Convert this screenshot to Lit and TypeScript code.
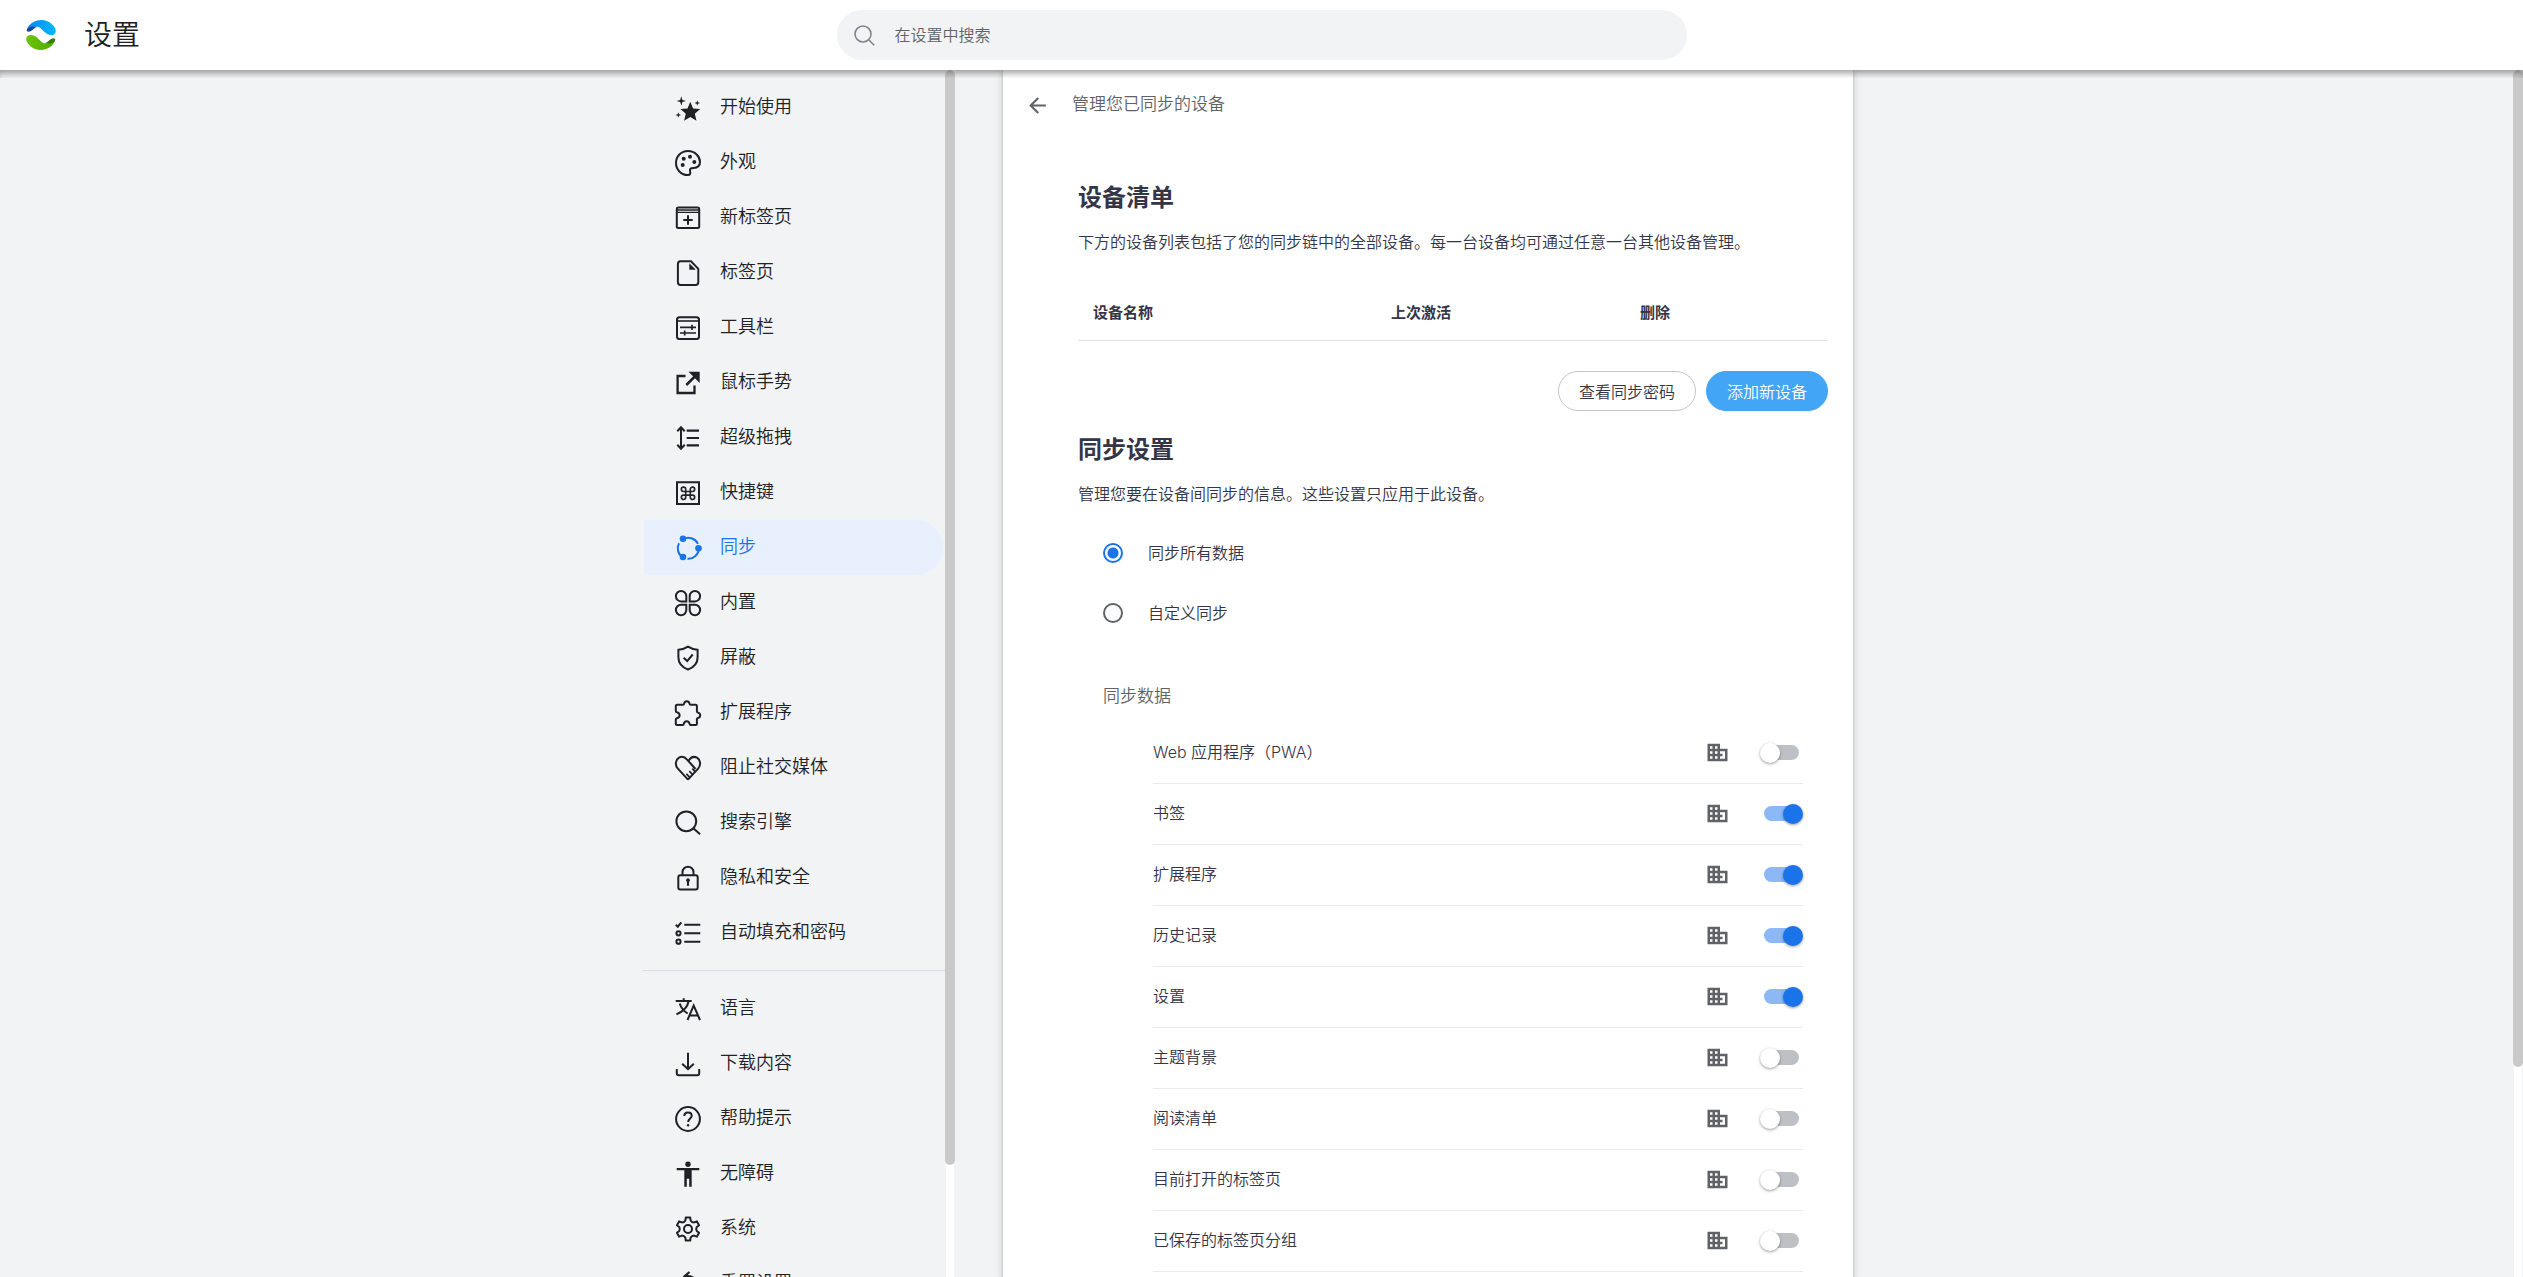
import { LitElement, html, css, svg, type SVGTemplateResult } from "lit";
import { customElement, property, state } from "lit/decorators.js";
import { classMap } from "lit/directives/class-map.js";

const cog = (() => {
  const pts: string[] = [];
  for (let i = 0; i < 6; i++) {
    const at = (deg: number, r: number) => {
      const a = ((deg + i * 60 - 90) * Math.PI) / 180;
      return `${(13 + r * Math.cos(a)).toFixed(2)} ${(12 + r * Math.sin(a)).toFixed(2)}`;
    };
    pts.push(`${i ? "L" : "M"}${at(-11, 11.7)} L${at(11, 11.7)} L${at(17, 9)} Q${at(30, 7.6)} ${at(43, 9)}`);
  }
  return pts.join(" ") + "Z";
})();

const icons: Record<string, SVGTemplateResult> = {
  star: svg`
    <path class="solid" d="M15.3 5.8l2.8 6.6 7.1.6-5.4 4.7 1.7 7.1-6.2-3.8-6.2 3.8 1.7-7.1-5.4-4.7 7.1-.6z"/>
    <path class="solid" d="M6.3.3l1.1 3.6L11 5 7.4 6.1 6.3 9.7 5.2 6.1 1.6 5l3.6-1.1zM22.3 4.2l.7 2.1 2.1.7-2.1.7-.7 2.1-.7-2.1-2.1-.7 2.1-.7zM3.3 16.2l.7 2.1 2.1.7-2.1.7-.7 2.1-.7-2.1L.5 19l2.1-.7z"/>`,
  palette: svg`
    <path d="M13 24C6 24 1 18.5 1 12S6 0 13 0s12 5.5 12 11c0 4-2.500 5.800-6.500 6-3 .1-4 1-3.400 3.300.5 2.200 0 3.700-2.100 3.700z"/>
    <g class="solid"><circle cx="8.700" cy="7.700" r="2"/><circle cx="15" cy="5.700" r="2"/><circle cx="19.300" cy="11" r="2"/><circle cx="7.700" cy="14" r="2"/></g>`,
  newtab: svg`<rect x="1.800" y="1.500" width="22.400" height="20.500" rx="1.500"/><path d="M2 6.300h22M2 4h22" stroke-width="1.300"/><path d="M13 9.300v9.400M8.300 14h9.400"/>`,
  page: svg`<path d="M5.500.300h10.500l7.300 7.500v13.500a2.700 2.700 0 0 1-2.700 2.700h-15a2.700 2.700 0 0 1-2.700-2.700V3a2.700 2.700 0 0 1 2.600-2.700z"/><path class="solid" d="M14.300 2.300v6.500h6.500z"/>`,
  toolbar: svg`<rect x="2" y="1.300" width="22" height="21.700" rx="2.500"/><path d="M2 5h22" stroke-width="1.600"/><path d="M5 11.300h16M17 8.700v5.200M5 17h16M9.700 14.400v5.200" stroke-width="1.700"/>`,
  open: svg`<path d="M10.500 5H2.600v17H19.500v-7.500" stroke-width="2.300"/><path d="M11.300 14l9-9" stroke-width="2.500"/><path class="solid" d="M13.500.700h11.200v11.200z"/>`,
  lines: svg`<path d="M6 1.500v21M2.300 5.300L6 1.300l3.700 4M2.300 18.700l3.700 4 3.700-4"/><path d="M11.700 4.700H24M11.700 12H24M11.700 19.300H24" stroke-width="2.200"/>`,
  command: svg`<path d="M2 1.300h22v21.700H2z" stroke-width="2"/><path d="M10.700 8.300v8a2.200 2.200 0 1 1-2.200-2.200h9a2.200 2.200 0 1 1-2.200 2.200v-8a2.200 2.200 0 1 1 2.200 2.200h-9a2.200 2.200 0 1 1 2.200-2.200z" stroke-width="1.600"/>`,
  sync: svg`<path d="M8 3.200A10.600 10.600 0 0 1 23 7.900M23.900 12.300A10.600 10.600 0 0 1 12.500 22.800M8 21.400A10.600 10.600 0 0 1 4 7.200" stroke-width="2"/><g class="solid"><circle cx="8" cy="2.800" r="3.300"/><circle cx="23.500" cy="12.300" r="3.300"/><circle cx="8" cy="21" r="3.300"/></g>`,
  clover: svg`<path d="M11.300 10.400H6.100a5.200 5.200 0 1 1 5.200-5.200zM14.700 10.400h5.200a5.200 5.200 0 1 0-5.200-5.200zM11.300 13.800H6.100a5.200 5.200 0 1 0 5.200 5.200zM14.700 13.800h5.200a5.200 5.200 0 1 1-5.200 5.200z"/>`,
  shield: svg`<path d="M13 .600c2.800 1.800 6 2.900 9.600 3.200v7.400c0 5.800-4 10.200-9.600 12.300C7.400 21.400 3.400 17 3.400 11.200V3.800C7 3.500 10.200 2.400 13 .600z"/><path d="M8.700 11.800l3.500 3.300 5.500-6.600"/>`,
  puzzle: svg`<path d="M2 3.800h6c.8 0 1-.500 1.100-1.200C9.400 1.200 10.300.300 11.800.300s2.400.900 2.700 2.300c.100.700.500 1.200 1.200 1.200h5c.800 0 1.200.400 1.200 1.200v5.300c0 .800.400 1.100 1.100 1.300 1.300.400 2.200 1.300 2.200 2.700s-.900 2.400-2.200 2.700c-.7.200-1.100.500-1.100 1.300v4.600c0 .700-.400 1.100-1.200 1.100h-5c-.8 0-1-.400-1.100-1.100-.300-1.700-1.200-2.700-2.900-2.700s-2.600 1-2.900 2.700c-.1.700-.400 1.100-1.100 1.100H2c-.8 0-1.200-.4-1.200-1.100v-4.400c0-.8.400-1.100 1.100-1.300 1.700-.400 2.700-1.400 2.700-3s-1-2.600-2.700-3c-.7-.200-1.100-.5-1.100-1.300V5c0-.8.400-1.200 1.200-1.200z"/>`,
  heart: svg`<path d="M13 23.600L2.700 12.400C-.300 9 .500 3.800 4 1.700c3-1.800 6-.600 8.300 2.100L20.500 13M13.500 4.800C15.800 1.200 19 0 22 1.700c3.500 2.100 4.200 7.200 1.300 10.600L13 23.600"/><path d="M17.300 12.600l2.600 2.900M14.300 15.100l3.200 3.400M11.400 17.800l3.400 3.500" stroke-width="1.700"/>`,
  search: svg`<circle cx="11.300" cy="10.300" r="9.900"/><path d="M18.300 17.200l6.800 6"/>`,
  lock: svg`<rect x="3.300" y="9.300" width="19.400" height="14.300" rx="2"/><path d="M7.500 9.300V6.200a5.500 5.500 0 0 1 11 0v3.100"/><path class="solid" d="M13 12.300a2 2 0 0 1 1 3.700v3.700h-2V16a2 2 0 0 1 1-3.700z"/>`,
  checklist: svg`<path d="M9.300 3.700h16M9.300 12.300h16M9.300 20.700h16"/><path d="M.800 3.700l2 2 3.500-4.400"/><circle cx="3.500" cy="12.300" r="2.100"/><circle cx="3.500" cy="20.700" r="2.100"/>`,
  language: svg`<path d="M.700 4h16M8.700 1.200V4M13.700 4c-1 5.500-6 10.700-12.300 13.300M4.700 6.500c1.500 4.700 4.500 8 8 10" stroke-width="2"/><path d="M12.500 23l6.200-14.500L25 23M14.700 18.500h8" stroke-width="2"/>`,
  download: svg`<path d="M13 .700v16.300M7.200 11.700L13 17.200l5.800-5.500M1.800 17v4.200a2 2 0 0 0 2 2h18.400a2 2 0 0 0 2-2V17"/>`,
  help: svg`<circle cx="13" cy="12" r="11.900"/><path d="M9.300 9c0-2.300 1.600-3.600 3.700-3.600s3.700 1.300 3.700 3.300c0 2.700-3.500 3-3.500 6.300"/><circle class="solid" cx="13.100" cy="18.200" r="1.200"/>`,
  access: svg`<circle class="solid" cx="13" cy="2.300" r="2.700"/><path class="solid" d="M1.700 6h22.600v2.200h-7.600v16.500h-2.500v-7.900h-2.400v7.900H9.300V8.200H1.700z"/>`,
  gear: svg`<path d=${cog} stroke-linejoin="round"/><circle cx="13" cy="12" r="4"/>`,
  reset: svg`<path d="M14.500 0L9.500 4.200l5 4.300M9.500 4.200h3.500a9.500 9.500 0 1 1-9.500 9.500" stroke-width="2.200"/>`,
};

@customElement("nav-icon")
class NavIcon extends LitElement {
  static styles = css`
    :host { display: flex; flex: none; }
    .icon { display: block; fill: none; stroke: currentColor; stroke-width: 2; overflow: visible; }
    .solid { fill: currentColor; stroke: none; }
  `;
  @property() name = "";
  render() {
    return html`<svg class="icon" width="27" height="27" viewBox="-1 -2 27 27" aria-hidden="true">${icons[this.name]}</svg>`;
  }
}

const primaryNav: [string, string][] = [
  ["star", "开始使用"], ["palette", "外观"], ["newtab", "新标签页"], ["page", "标签页"],
  ["toolbar", "工具栏"], ["open", "鼠标手势"], ["lines", "超级拖拽"], ["command", "快捷键"],
  ["sync", "同步"], ["clover", "内置"], ["shield", "屏蔽"], ["puzzle", "扩展程序"],
  ["heart", "阻止社交媒体"], ["search", "搜索引擎"], ["lock", "隐私和安全"], ["checklist", "自动填充和密码"],
];
const secondaryNav: [string, string][] = [
  ["language", "语言"], ["download", "下载内容"], ["help", "帮助提示"],
  ["access", "无障碍"], ["gear", "系统"], ["reset", "重置设置"],
];

@customElement("settings-menu")
class SettingsMenu extends LitElement {
  static styles = css`
    :host { display: block; min-height: 0; overflow: hidden; }
    .menu { display: flex; flex-direction: column; padding-top: 10px; }
    .item {
      box-sizing: border-box; display: flex; align-items: center; gap: 19px; flex: none;
      height: 55px; margin: 0 2px 0 1px; padding-left: 30px; border-radius: 0 28px 28px 0;
      color: #202124; font-size: 18px; line-height: 24px; text-decoration: none;
    }
    .label { padding-bottom: 6px; }
    .active { background: #e8f0fe; color: #1a73e8; }
    .divider { flex: none; height: 1px; margin: 10px 0; border: 0; background: #dadce0; }
  `;
  item([icon, label]: [string, string]) {
    const active = icon === "sync";
    return html`<a class=${classMap({ item: true, active })} href="#${icon}" aria-current=${active ? "page" : "false"}>
      <nav-icon name=${icon}></nav-icon><span class="label">${label}</span></a>`;
  }
  render() {
    return html`<nav class="menu">
      ${primaryNav.map((n) => this.item(n))}
      <hr class="divider" />
      ${secondaryNav.map((n) => this.item(n))}
    </nav>`;
  }
}

@customElement("sync-page")
class SyncPage extends LitElement {
  static styles = css`
    :host { display: block; color: #343546; font-size: 16px; line-height: 24px; }
    .subpage { display: flex; align-items: center; gap: 22px; height: 70px; padding-left: 22px; color: #5f6368; }
    .back { display: flex; padding: 0; border: 0; background: none; color: inherit; }
    .arrow { display: block; fill: currentColor; }
    .subtitle { margin: 0; padding-bottom: 4px; font-size: 17px; font-weight: inherit; line-height: 24px; }
    .content { padding: 38px 25px 0 75px; }
    .heading { margin: 0; font-size: 24px; font-weight: 700; line-height: 36px; }
    .lead { margin: 15px 0 0; }
    .devices { width: 100%; margin-top: 43px; border-collapse: collapse; table-layout: fixed; font-size: 15px; }
    .devices th { height: 44px; padding: 0 15px 12px; border-bottom: 1px solid #e1e2e8; box-sizing: border-box; text-align: left; font-weight: 700; }
    .name-col { width: 298px; }
    .last-col { width: 249px; }
    .actions { display: flex; justify-content: flex-end; gap: 10px; padding: 30px 0 19px; }
    .btn { box-sizing: border-box; height: 40px; padding: 0 20px; border: 1px solid #c2c4cf; border-radius: 20px; background: #fff; color: #343546; font: inherit; }
    .primary { border-color: #42a5f5; background: #42a5f5; color: #fff; }
    .choices { display: flex; flex-direction: column; gap: 20px; margin: 0; padding: 28px 25px 0; border: 0; }
    .choice { display: flex; align-items: center; gap: 25px; height: 40px; }
    .choice-label { padding-bottom: 2px; }
    .radio { appearance: none; box-sizing: border-box; width: 20px; height: 20px; margin: 0; border: 2px solid #5f6368; border-radius: 50%; }
    .radio:checked { border-color: #1a73e8; background: radial-gradient(circle, #1a73e8 5px, transparent 6px); }
    .group { margin: 50px 0 0 25px; color: #5f6368; font-size: 17px; font-weight: inherit; line-height: 24px; }
    .types { display: flex; flex-direction: column; margin: 16px 25px 0 75px; padding: 0; list-style: none; }
    .type { display: flex; align-items: center; height: 60px; border-bottom: 1px solid #ebebec; }
    .type-label { flex: 1; padding-bottom: 2px; font-family: Inter, "Noto Sans CJK SC", sans-serif; }
    .org { flex: none; margin-right: 30px; fill: #5f6368; fill-rule: evenodd; }
    .toggle { appearance: none; position: relative; width: 43px; height: 20px; margin: 0; flex: none; }
    .toggle::before { content: ""; position: absolute; top: 2px; left: 4px; width: 35px; height: 15px; border-radius: 8px; background: #bdc1c6; }
    .toggle::after { content: ""; position: absolute; top: 0; left: 0; width: 20px; height: 20px; border-radius: 50%; background: #fff; box-shadow: 0 1px 3px rgba(0, 0, 0, 0.4); }
    .toggle:checked::before { background: #8cb8f6; }
    .toggle:checked::after { left: auto; right: 0; background: #1a73e8; }
  `;
  @state() types: [string, boolean][] = [
    ["Web 应用程序（PWA）", false], ["书签", true], ["扩展程序", true], ["历史记录", true], ["设置", true],
    ["主题背景", false], ["阅读清单", false], ["目前打开的标签页", false], ["已保存的标签页分组", false],
  ];
  render() {
    return html`
      <header class="subpage">
        <button class="back" aria-label="返回">
          <svg class="arrow" width="25" height="25" viewBox="0 0 24 24"><path d="M20 11H7.830l5.590-5.590L12 4l-8 8 8 8 1.410-1.410L7.830 13H20v-2z"/></svg>
        </button>
        <h1 class="subtitle">管理您已同步的设备</h1>
      </header>
      <div class="content">
        <h2 class="heading">设备清单</h2>
        <p class="lead">下方的设备列表包括了您的同步链中的全部设备。每一台设备均可通过任意一台其他设备管理。</p>
        <table class="devices">
          <thead><tr><th class="name-col">设备名称</th><th class="last-col">上次激活</th><th>删除</th></tr></thead>
        </table>
        <div class="actions">
          <button class="btn">查看同步密码</button>
          <button class="btn primary">添加新设备</button>
        </div>
        <h2 class="heading">同步设置</h2>
        <p class="lead">管理您要在设备间同步的信息。这些设置只应用于此设备。</p>
        <fieldset class="choices">
          <label class="choice"><input class="radio" type="radio" name="mode" checked /><span class="choice-label">同步所有数据</span></label>
          <label class="choice"><input class="radio" type="radio" name="mode" /><span class="choice-label">自定义同步</span></label>
        </fieldset>
        <h3 class="group">同步数据</h3>
        <ul class="types">
          ${this.types.map(([label, on], i) => html`<li class="type">
            <label class="type-label" for="type-${i}">${label}</label>
            <svg class="org" width="25" height="25" viewBox="0 0 20 20" aria-hidden="true"><path d="M2 3h10v4h6v10H2zM4 5v2h2V5zM8 5v2h2V5zM4 9v2h2V9zM8 9v2h2V9zM4 13v2h2v-2zM8 13v2h2v-2zM12 9v2h2v2h-2v2h4V9z"/></svg>
            <input class="toggle" type="checkbox" role="switch" id="type-${i}" .checked=${on} />
          </li>`)}
        </ul>
      </div>`;
  }
}

@customElement("app-root")
class AppRoot extends LitElement {
  static styles = css`
    :host {
      display: flex; flex-direction: column; height: 100vh; overflow: hidden; background: #f1f3f4;
      font-family: "Noto Sans CJK SC", "Noto Sans", sans-serif; font-weight: 350; color: #202124;
    }
    .topbar {
      position: relative; z-index: 1; flex: none; display: grid; grid-template-columns: 1fr minmax(0, 850px) 1fr;
      align-items: center; height: 70px; background: #fff;
    }
    .topbar::after { content: ""; position: absolute; inset: 100% 0 auto; height: 8px; box-shadow: inset 0 6px 7px -3px rgba(0, 0, 0, 0.4); pointer-events: none; }
    .brand { display: flex; align-items: center; gap: 28px; padding-left: 26px; }
    .logo { display: block; }
    .title { margin: 0; font-size: 28px; font-weight: inherit; line-height: 40px; padding-bottom: 4px; }
    .search { display: flex; align-items: center; gap: 20px; height: 50px; padding: 0 17px; border-radius: 25px; background: #f1f3f4; }
    .glass { flex: none; fill: none; stroke: #80868b; stroke-width: 1.600; }
    .field { flex: 1; min-width: 0; padding: 0 0 2px; border: 0; outline: 0; background: none; color: #202124; font-family: inherit; font-weight: inherit; font-size: 16px; line-height: 24px; }
    .field::placeholder { color: #5f6368; opacity: 1; }
    .body { flex: 1; min-height: 0; display: flex; }
    .columns { flex: 1; min-width: 0; display: flex; justify-content: center; padding-right: 17px; }
    .menu { flex: 0 0 302px; }
    .rail { flex: 0 0 10px; display: flex; flex-direction: column; background: linear-gradient(90deg, transparent 1px, #fff 1px 9px, transparent 9px); }
    .thumb { border-radius: 5px; background: #c9c9c9; }
    .menu-thumb { flex: 0 0 90.700%; }
    .page-thumb { flex: 0 0 82.600%; }
    .card { flex: 0 1 850px; min-width: 0; margin-left: 48px; overflow: hidden; background: #fff; box-shadow: 0 1px 2px rgba(60, 64, 67, 0.3), 0 2px 6px 2px rgba(60, 64, 67, 0.15); }
  `;
  render() {
    return html`
      <header class="topbar">
        <div class="brand">
          <svg class="logo" width="30" height="30" viewBox="0 0 30 30" aria-hidden="true">
            <defs>
              <linearGradient id="sky"><stop offset="0" stop-color="#0a84f0"/><stop offset="1" stop-color="#00baff"/></linearGradient>
              <linearGradient id="leaf"><stop offset="0" stop-color="#6cc600"/><stop offset="1" stop-color="#4fa800"/></linearGradient>
            </defs>
            <path fill="url(#sky)" d="M1 9C3.500 3.500 9 0 15 0c8.500 0 15 6.500 14.800 11.500-.300 4-5.300 4.600-9 2.200C16.500 11 14.500 6.500 10.500 6.500 7 6.500 4 8.500 1 9z"/>
            <path fill="#1b4796" d="M.800 10.800C0 8.200 5 5.800 11.500 6.800 8.500 7.500 7 10 5 11c-1.800.900-3.700.900-4.200-.200z"/>
            <path fill="url(#leaf)" d="M29 21c-2.500 5.500-8 9-14 9C6.500 30 0 23.500.200 18.500c.300-4 5.300-4.600 9-2.200 4.300 2.700 6.300 7.200 10.300 7.200 3.500 0 6.500-2 9.500-2.500z"/>
            <path fill="#3b7d00" d="M29.200 19.200c.8 2.600-4.200 5-10.700 4 3-.700 4.500-3.200 6.500-4.200 1.800-.900 3.700-.900 4.200.200z"/>
          </svg>
          <h1 class="title">设置</h1>
        </div>
        <label class="search">
          <svg class="glass" width="21" height="21" viewBox="0 0 21 21" aria-hidden="true"><circle cx="9" cy="9" r="8"/><path d="M14.700 14.700l5.500 5.500"/></svg>
          <input class="field" type="search" placeholder="在设置中搜索" aria-label="在设置中搜索" />
        </label>
      </header>
      <div class="body">
        <div class="columns">
          <settings-menu class="menu"></settings-menu>
          <div class="rail"><div class="thumb menu-thumb"></div></div>
          <main class="card"><sync-page></sync-page></main>
        </div>
        <div class="rail"><div class="thumb page-thumb"></div></div>
      </div>`;
  }
}
